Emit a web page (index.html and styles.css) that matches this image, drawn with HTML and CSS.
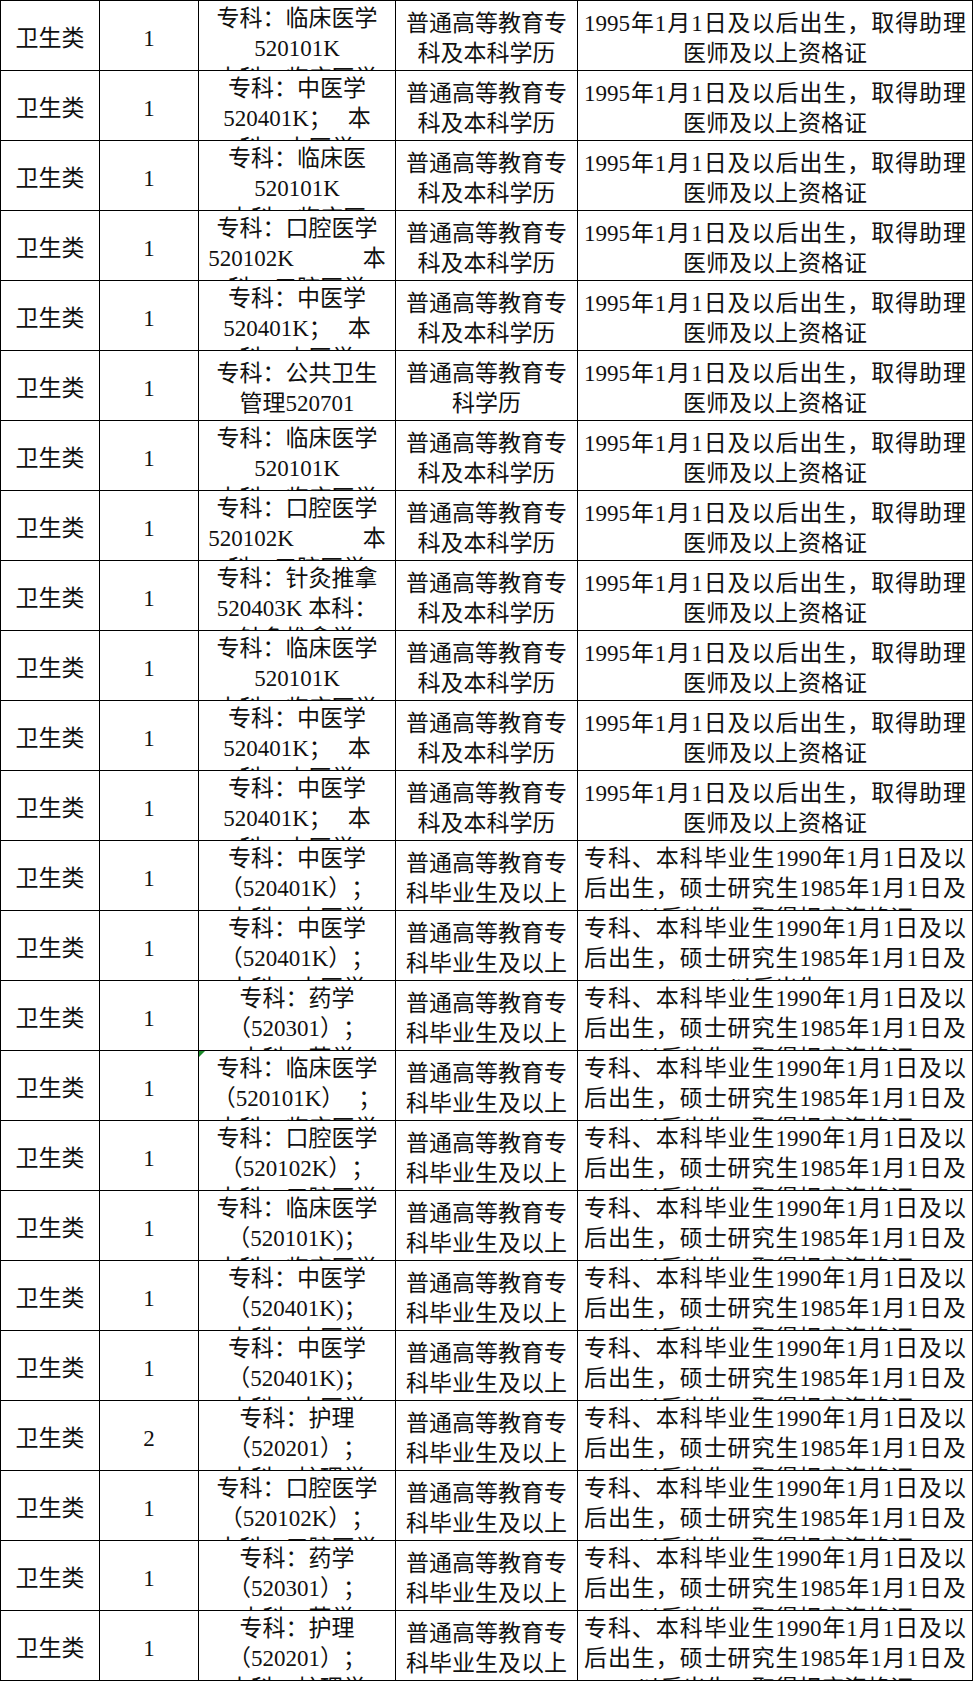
FILE: index.html
```html
<!DOCTYPE html>
<html lang="zh-CN">
<head>
<meta charset="utf-8">
<title>岗位表</title>
<link rel="stylesheet" href="styles.css">
</head>
<body>
<table class="sheet">
<colgroup>
<col class="w-type"><col class="w-num"><col class="w-spec"><col class="w-edu"><col class="w-req">
</colgroup>
<tbody>
<tr>
<td><div class="cell"><div>卫生类</div></div></td>
<td><div class="cell"><div>1</div></div></td>
<td><div class="cell spec top"><div>专科：临床医学<br>520101K<br>本科：临床医学</div></div></td>
<td><div class="cell edu"><div>普通高等教育专科及本科学历</div></div></td>
<td><div class="cell req"><div>1995年1月1日及以后出生，取得助理医师及以上资格证</div></div></td>
</tr>
<tr>
<td><div class="cell"><div>卫生类</div></div></td>
<td><div class="cell"><div>1</div></div></td>
<td><div class="cell spec top"><div>专科：中医学<br>520401K；<span class="gap-s"></span>本<br>科：中医学</div></div></td>
<td><div class="cell edu"><div>普通高等教育专科及本科学历</div></div></td>
<td><div class="cell req"><div>1995年1月1日及以后出生，取得助理医师及以上资格证</div></div></td>
</tr>
<tr>
<td><div class="cell"><div>卫生类</div></div></td>
<td><div class="cell"><div>1</div></div></td>
<td><div class="cell spec top"><div>专科：临床医<br>520101K<br>本科：临床医</div></div></td>
<td><div class="cell edu"><div>普通高等教育专科及本科学历</div></div></td>
<td><div class="cell req"><div>1995年1月1日及以后出生，取得助理医师及以上资格证</div></div></td>
</tr>
<tr>
<td><div class="cell"><div>卫生类</div></div></td>
<td><div class="cell"><div>1</div></div></td>
<td><div class="cell spec top"><div>专科：口腔医学<br>520102K<span class="gap-l"></span>本<br>科：口腔医学</div></div></td>
<td><div class="cell edu"><div>普通高等教育专科及本科学历</div></div></td>
<td><div class="cell req"><div>1995年1月1日及以后出生，取得助理医师及以上资格证</div></div></td>
</tr>
<tr>
<td><div class="cell"><div>卫生类</div></div></td>
<td><div class="cell"><div>1</div></div></td>
<td><div class="cell spec top"><div>专科：中医学<br>520401K；<span class="gap-s"></span>本<br>科：中医学</div></div></td>
<td><div class="cell edu"><div>普通高等教育专科及本科学历</div></div></td>
<td><div class="cell req"><div>1995年1月1日及以后出生，取得助理医师及以上资格证</div></div></td>
</tr>
<tr>
<td><div class="cell"><div>卫生类</div></div></td>
<td><div class="cell"><div>1</div></div></td>
<td><div class="cell spec"><div>专科：公共卫生<br>管理520701</div></div></td>
<td><div class="cell edu"><div>普通高等教育专科学历</div></div></td>
<td><div class="cell req"><div>1995年1月1日及以后出生，取得助理医师及以上资格证</div></div></td>
</tr>
<tr>
<td><div class="cell"><div>卫生类</div></div></td>
<td><div class="cell"><div>1</div></div></td>
<td><div class="cell spec top"><div>专科：临床医学<br>520101K<br>本科：临床医学</div></div></td>
<td><div class="cell edu"><div>普通高等教育专科及本科学历</div></div></td>
<td><div class="cell req"><div>1995年1月1日及以后出生，取得助理医师及以上资格证</div></div></td>
</tr>
<tr>
<td><div class="cell"><div>卫生类</div></div></td>
<td><div class="cell"><div>1</div></div></td>
<td><div class="cell spec top"><div>专科：口腔医学<br>520102K<span class="gap-l"></span>本<br>科：口腔医学</div></div></td>
<td><div class="cell edu"><div>普通高等教育专科及本科学历</div></div></td>
<td><div class="cell req"><div>1995年1月1日及以后出生，取得助理医师及以上资格证</div></div></td>
</tr>
<tr>
<td><div class="cell"><div>卫生类</div></div></td>
<td><div class="cell"><div>1</div></div></td>
<td><div class="cell spec top"><div>专科：针灸推拿<br>520403K 本科：<br>针灸推拿学</div></div></td>
<td><div class="cell edu"><div>普通高等教育专科及本科学历</div></div></td>
<td><div class="cell req"><div>1995年1月1日及以后出生，取得助理医师及以上资格证</div></div></td>
</tr>
<tr>
<td><div class="cell"><div>卫生类</div></div></td>
<td><div class="cell"><div>1</div></div></td>
<td><div class="cell spec top"><div>专科：临床医学<br>520101K<br>本科：临床医学</div></div></td>
<td><div class="cell edu"><div>普通高等教育专科及本科学历</div></div></td>
<td><div class="cell req"><div>1995年1月1日及以后出生，取得助理医师及以上资格证</div></div></td>
</tr>
<tr>
<td><div class="cell"><div>卫生类</div></div></td>
<td><div class="cell"><div>1</div></div></td>
<td><div class="cell spec top"><div>专科：中医学<br>520401K；<span class="gap-s"></span>本<br>科：中医学</div></div></td>
<td><div class="cell edu"><div>普通高等教育专科及本科学历</div></div></td>
<td><div class="cell req"><div>1995年1月1日及以后出生，取得助理医师及以上资格证</div></div></td>
</tr>
<tr>
<td><div class="cell"><div>卫生类</div></div></td>
<td><div class="cell"><div>1</div></div></td>
<td><div class="cell spec top"><div>专科：中医学<br>520401K；<span class="gap-s"></span>本<br>科：中医学</div></div></td>
<td><div class="cell edu"><div>普通高等教育专科及本科学历</div></div></td>
<td><div class="cell req"><div>1995年1月1日及以后出生，取得助理医师及以上资格证</div></div></td>
</tr>
<tr>
<td><div class="cell"><div>卫生类</div></div></td>
<td><div class="cell"><div>1</div></div></td>
<td><div class="cell spec top"><div>专科：中医学<br>（520401K）；<br>本科：中医学</div></div></td>
<td><div class="cell edu"><div>普通高等教育专科毕业生及以上</div></div></td>
<td><div class="cell req top"><div>专科、本科毕业生1990年1月1日及以后出生，硕士研究生1985年1月1日及以后出生，取得相应资格证</div></div></td>
</tr>
<tr>
<td><div class="cell"><div>卫生类</div></div></td>
<td><div class="cell"><div>1</div></div></td>
<td><div class="cell spec top"><div>专科：中医学<br>（520401K）；<br>本科：中医学</div></div></td>
<td><div class="cell edu"><div>普通高等教育专科毕业生及以上</div></div></td>
<td><div class="cell req top"><div>专科、本科毕业生1990年1月1日及以后出生，硕士研究生1985年1月1日及以后出生</div></div></td>
</tr>
<tr>
<td><div class="cell"><div>卫生类</div></div></td>
<td><div class="cell"><div>1</div></div></td>
<td><div class="cell spec top"><div>专科：药学<br>（520301）；<br>本科：药学</div></div></td>
<td><div class="cell edu"><div>普通高等教育专科毕业生及以上</div></div></td>
<td><div class="cell req top"><div>专科、本科毕业生1990年1月1日及以后出生，硕士研究生1985年1月1日及以后出生，取得相应资格证</div></div></td>
</tr>
<tr>
<td><div class="cell"><div>卫生类</div></div></td>
<td><div class="cell"><div>1</div></div></td>
<td><div class="cell spec top flag"><div>专科：临床医学<br>（520101K）<span class="gap-xs"></span>；<br>本科：临床医学</div></div></td>
<td><div class="cell edu"><div>普通高等教育专科毕业生及以上</div></div></td>
<td><div class="cell req top"><div>专科、本科毕业生1990年1月1日及以后出生，硕士研究生1985年1月1日及以后出生，取得相应资格证</div></div></td>
</tr>
<tr>
<td><div class="cell"><div>卫生类</div></div></td>
<td><div class="cell"><div>1</div></div></td>
<td><div class="cell spec top"><div>专科：口腔医学<br>（520102K）；<br>本科：口腔医学</div></div></td>
<td><div class="cell edu"><div>普通高等教育专科毕业生及以上</div></div></td>
<td><div class="cell req top"><div>专科、本科毕业生1990年1月1日及以后出生，硕士研究生1985年1月1日及以后出生，取得相应资格证</div></div></td>
</tr>
<tr>
<td><div class="cell"><div>卫生类</div></div></td>
<td><div class="cell"><div>1</div></div></td>
<td><div class="cell spec top"><div>专科：临床医学<br>（520101K)；<br>本科：临床医学</div></div></td>
<td><div class="cell edu"><div>普通高等教育专科毕业生及以上</div></div></td>
<td><div class="cell req top"><div>专科、本科毕业生1990年1月1日及以后出生，硕士研究生1985年1月1日及以后出生，取得相应资格证</div></div></td>
</tr>
<tr>
<td><div class="cell"><div>卫生类</div></div></td>
<td><div class="cell"><div>1</div></div></td>
<td><div class="cell spec top"><div>专科：中医学<br>（520401K)；<br>本科：中医学</div></div></td>
<td><div class="cell edu"><div>普通高等教育专科毕业生及以上</div></div></td>
<td><div class="cell req top"><div>专科、本科毕业生1990年1月1日及以后出生，硕士研究生1985年1月1日及以后出生，取得相应资格证</div></div></td>
</tr>
<tr>
<td><div class="cell"><div>卫生类</div></div></td>
<td><div class="cell"><div>1</div></div></td>
<td><div class="cell spec top"><div>专科：中医学<br>（520401K)；<br>本科：中医学</div></div></td>
<td><div class="cell edu"><div>普通高等教育专科毕业生及以上</div></div></td>
<td><div class="cell req top"><div>专科、本科毕业生1990年1月1日及以后出生，硕士研究生1985年1月1日及以后出生，取得相应资格证</div></div></td>
</tr>
<tr>
<td><div class="cell"><div>卫生类</div></div></td>
<td><div class="cell"><div>2</div></div></td>
<td><div class="cell spec top"><div>专科：护理<br>（520201）；<br>本科：护理学</div></div></td>
<td><div class="cell edu"><div>普通高等教育专科毕业生及以上</div></div></td>
<td><div class="cell req top"><div>专科、本科毕业生1990年1月1日及以后出生，硕士研究生1985年1月1日及以后出生，取得相应资格证</div></div></td>
</tr>
<tr>
<td><div class="cell"><div>卫生类</div></div></td>
<td><div class="cell"><div>1</div></div></td>
<td><div class="cell spec top"><div>专科：口腔医学<br>（520102K）；<br>本科：口腔医学</div></div></td>
<td><div class="cell edu"><div>普通高等教育专科毕业生及以上</div></div></td>
<td><div class="cell req top"><div>专科、本科毕业生1990年1月1日及以后出生，硕士研究生1985年1月1日及以后出生，取得相应资格证</div></div></td>
</tr>
<tr>
<td><div class="cell"><div>卫生类</div></div></td>
<td><div class="cell"><div>1</div></div></td>
<td><div class="cell spec top"><div>专科：药学<br>（520301）；<br>本科：药学</div></div></td>
<td><div class="cell edu"><div>普通高等教育专科毕业生及以上</div></div></td>
<td><div class="cell req top"><div>专科、本科毕业生1990年1月1日及以后出生，硕士研究生1985年1月1日及以后出生，取得相应资格证</div></div></td>
</tr>
<tr>
<td><div class="cell"><div>卫生类</div></div></td>
<td><div class="cell"><div>1</div></div></td>
<td><div class="cell spec top"><div>专科：护理<br>（520201）；<br>本科：护理学</div></div></td>
<td><div class="cell edu"><div>普通高等教育专科毕业生及以上</div></div></td>
<td><div class="cell req top"><div>专科、本科毕业生1990年1月1日及以后出生，硕士研究生1985年1月1日及以后出生，取得相应资格证</div></div></td>
</tr>
</tbody>
</table>
</body>
</html>
```

FILE: styles.css
```css
* {
  box-sizing: border-box;
}

html,
body {
  margin: 0;
  padding: 0;
  background: #fff;
}

body {
  font-family: "Liberation Serif", "Noto Sans CJK SC", serif;
  font-size: 23px;
  color: #111;
  text-spacing-trim: space-all;
}

.sheet {
  border-collapse: collapse;
  table-layout: fixed;
  width: 973px;
}

.w-type { width: 99px; }
.w-num { width: 99px; }
.w-spec { width: 197px; }
.w-edu { width: 182px; }
.w-req { width: 395px; }

.sheet td {
  border: 1px solid #000;
  padding: 0;
  vertical-align: top;
}

.cell {
  position: relative;
  height: 69px;
  overflow: hidden;
  display: flex;
  flex-direction: column;
  justify-content: center;
  padding-top: 6px;
  line-height: 30px;
  text-align: center;
}

.cell.top {
  justify-content: flex-start;
  padding-top: 3px;
}

.spec {
  padding-left: 9px;
  padding-right: 9px;
  white-space: nowrap;
}

.edu {
  padding-left: 9px;
  padding-right: 9px;
}

.req {
  padding-left: 6px;
  padding-right: 6px;
  text-align: justify;
  text-align-last: center;
}

.gap-xs,
.gap-s,
.gap-l {
  display: inline-block;
}

.gap-xs { width: 14px; }
.gap-s { width: 16px; }
.gap-l { width: 69px; }

.flag::before {
  content: "";
  position: absolute;
  top: 0;
  left: 0;
  border-top: 6px solid #1b8a2a;
  border-right: 6px solid transparent;
}
```
